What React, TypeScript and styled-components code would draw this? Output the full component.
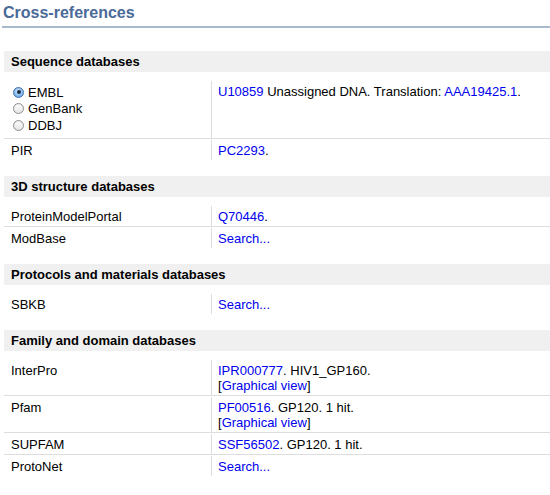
import React from "react";
import styled, { createGlobalStyle } from "styled-components";

const GlobalStyle = createGlobalStyle`
  html, body { margin: 0; padding: 0; background: #fff; }
  body {
    font-family: "Liberation Sans", Arial, Helvetica, sans-serif;
    font-size: 13px;
    color: #000;
  }
`;

const Page = styled.div`
  display: flex;
  flex-direction: column;
  padding-left: 2px;
  width: 548px;
  overflow: hidden;
`;

const Title = styled.h2`
  margin: 0 0 7px 0;
  padding: 3px 0 3px 1px;
  font-size: 16px;
  line-height: 20px;
  font-weight: bold;
  color: #4a6a98;
  border-bottom: 2px solid #a9b9cd;
`;

const Section = styled.section`
  margin: 16px 0 0 2px;
`;

const SectionHeader = styled.h3`
  margin: 0 0 9px 0;
  padding-left: 7px;
  height: 21px;
  line-height: 21px;
  font-size: 13px;
  font-weight: bold;
  background: #f0f0f0;
`;

const Row = styled.div`
  display: grid;
  grid-template-columns: 207px 1fr;
  & + & {
    border-top: 1px solid #dddddd;
    padding-top: 1px;
  }
`;

const NameCell = styled.div<{ $tall?: boolean }>`
  padding: 3px 7px ${(p) => (p.$tall ? "4px" : "2px")} 7px;
  line-height: 15px;
`;

const ValueCell = styled.div`
  padding: 3px 6px 2px 6px;
  line-height: 15px;
  border-left: 1px solid #dddddd;
`;

const Link = styled.a`
  color: #0000ee;
  text-decoration: none;
`;

const Line = styled.div``;

const RadioList = styled.div`
  display: flex;
  flex-direction: column;
`;

const RadioLine = styled.label`
  display: flex;
  align-items: center;
  height: 16.5px;
`;

const RadioDot = styled.span<{ $checked?: boolean }>`
  position: relative;
  box-sizing: border-box;
  width: 11px;
  height: 11px;
  margin: 0 4px 0 2px;
  border-radius: 50%;
  border: 1px solid ${(p) => (p.$checked ? "#3f6fae" : "#8f8f8f")};
  background: ${(p) =>
    p.$checked
      ? "radial-gradient(circle at 50% 35%, #d6ecff 0%, #8cc0f2 55%, #4d8fdc 100%)"
      : "linear-gradient(#ffffff, #e4e4e4)"};
  box-shadow: inset 0 1px 1px rgba(0, 0, 0, 0.08);
  &::after {
    content: "";
    display: ${(p) => (p.$checked ? "block" : "none")};
    position: absolute;
    left: 50%;
    top: 50%;
    width: 4px;
    height: 4px;
    margin: -2px 0 0 -2px;
    border-radius: 50%;
    background: #1a2a40;
  }
`;

type Entry = { name: React.ReactNode; value: React.ReactNode; tall?: boolean };
type Group = { title: string; rows: Entry[] };

const graphical = (
  <Line>
    [<Link href="#">Graphical view</Link>]
  </Line>
);

const groups: Group[] = [
  {
    title: "Sequence databases",
    rows: [
      {
        tall: true,
        name: (
          <RadioList>
            <RadioLine>
              <RadioDot $checked />
              EMBL
            </RadioLine>
            <RadioLine>
              <RadioDot />
              GenBank
            </RadioLine>
            <RadioLine>
              <RadioDot />
              DDBJ
            </RadioLine>
          </RadioList>
        ),
        value: (
          <>
            <Link href="#">U10859</Link> Unassigned DNA. Translation:{" "}
            <Link href="#">AAA19425.1</Link>.
          </>
        ),
      },
      { name: "PIR", value: <><Link href="#">PC2293</Link>.</> },
    ],
  },
  {
    title: "3D structure databases",
    rows: [
      { name: "ProteinModelPortal", value: <><Link href="#">Q70446</Link>.</> },
      { name: "ModBase", value: <Link href="#">Search...</Link> },
    ],
  },
  {
    title: "Protocols and materials databases",
    rows: [{ name: "SBKB", value: <Link href="#">Search...</Link> }],
  },
  {
    title: "Family and domain databases",
    rows: [
      {
        name: "InterPro",
        value: (
          <>
            <Line>
              <Link href="#">IPR000777</Link>. HIV1_GP160.
            </Line>
            {graphical}
          </>
        ),
      },
      {
        name: "Pfam",
        value: (
          <>
            <Line>
              <Link href="#">PF00516</Link>. GP120. 1 hit.
            </Line>
            {graphical}
          </>
        ),
      },
      {
        name: "SUPFAM",
        value: (
          <>
            <Link href="#">SSF56502</Link>. GP120. 1 hit.
          </>
        ),
      },
      { name: "ProtoNet", value: <Link href="#">Search...</Link> },
    ],
  },
];

export default function App() {
  return (
    <>
      <GlobalStyle />
      <Page>
        <Title>Cross-references</Title>
        {groups.map((g) => (
          <Section key={g.title}>
            <SectionHeader>{g.title}</SectionHeader>
            {g.rows.map((r, i) => (
              <Row key={i}>
                <NameCell $tall={r.tall}>{r.name}</NameCell>
                <ValueCell>{r.value}</ValueCell>
              </Row>
            ))}
          </Section>
        ))}
      </Page>
    </>
  );
}
